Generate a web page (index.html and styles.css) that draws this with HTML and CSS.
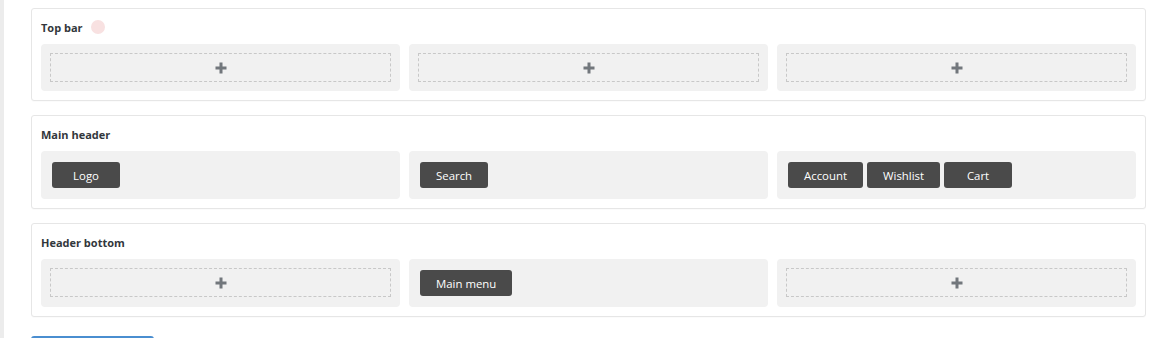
FILE: index.html
```html
<!DOCTYPE html>
<html lang="en">
<head>
<meta charset="utf-8">
<title>Header builder</title>
<link rel="stylesheet" href="styles.css">
</head>
<body>
<div class="layout">
  <div class="rail"></div>
  <main class="main">
    <section class="card">
      <h3 class="card-title">Top bar <span class="dot"></span></h3>
      <div class="cols">
        <div class="col"><div class="drop"><svg class="plus" viewBox="0 0 12 12"><path d="M6 0.5v11M0.5 6h11"/></svg></div></div>
        <div class="col"><div class="drop"><svg class="plus" viewBox="0 0 12 12"><path d="M6 0.5v11M0.5 6h11"/></svg></div></div>
        <div class="col"><div class="drop"><svg class="plus" viewBox="0 0 12 12"><path d="M6 0.5v11M0.5 6h11"/></svg></div></div>
      </div>
    </section>
    <section class="card">
      <h3 class="card-title">Main header</h3>
      <div class="cols">
        <div class="col"><div class="items"><span class="btn">Logo</span></div></div>
        <div class="col"><div class="items"><span class="btn">Search</span></div></div>
        <div class="col"><div class="items"><span class="btn">Account</span><span class="btn">Wishlist</span><span class="btn">Cart</span></div></div>
      </div>
    </section>
    <section class="card">
      <h3 class="card-title">Header bottom</h3>
      <div class="cols">
        <div class="col"><div class="drop"><svg class="plus" viewBox="0 0 12 12"><path d="M6 0.5v11M0.5 6h11"/></svg></div></div>
        <div class="col"><div class="items"><span class="btn">Main menu</span></div></div>
        <div class="col"><div class="drop"><svg class="plus" viewBox="0 0 12 12"><path d="M6 0.5v11M0.5 6h11"/></svg></div></div>
      </div>
    </section>
    <div class="save-bar"></div>
  </main>
</div>
</body>
</html>
```
FILE: styles.css
```css
* { box-sizing: border-box; }
html, body { margin: 0; padding: 0; background: #fff; }
body {
  font-family: "Open Sans", "Noto Sans", "Liberation Sans", sans-serif;
  color: #32373c;
  overflow: hidden;
  height: 338px;
}
.layout { display: flex; min-height: 338px; }
.rail { width: 4px; background: #ececec; flex: none; }
.main { width: 1142px; padding: 8px 0 0 27px; }
.card {
  border: 1px solid #e6e6e6;
  border-radius: 3px;
  padding: 0 9px 9px 9px;
  margin-bottom: 14px;
  background: #fff;
  box-shadow: 0 1px 1px rgba(0,0,0,0.02);
}
.card-title {
  margin: 0;
  padding: 11px 0 9px 0;
  height: 35px;
  font-size: 11px;
  line-height: 15px;
  font-weight: 700;
  display: flex;
  align-items: center;
  gap: 8px;
  color: #32373c;
}
.dot {
  width: 14px; height: 14px; border-radius: 50%;
  background: #f8e1e1; display: inline-block;
  margin-top: -2px;
}
.cols {
  display: grid;
  grid-template-columns: repeat(3, 1fr);
  gap: 9px;
}
.col {
  background: #f1f1f1;
  border-radius: 4px;
  padding: 9px;
}
.drop {
  height: 29px;
  border: 1px dashed #c8c8c8;
  display: flex;
  align-items: center;
  justify-content: center;
}
.plus { width: 12px; height: 12px; stroke: #72777c; stroke-width: 3; fill: none; }
.items { display: flex; gap: 4px; padding: 2px; }
.btn {
  display: inline-flex;
  align-items: center;
  justify-content: center;
  height: 26px;
  min-width: 68px;
  padding: 0 16px;
  background: #4a4a4a;
  color: #fff;
  border-radius: 3px;
  font-size: 11.4px;
}
.save-bar {
  margin-top: 19px;
  width: 123px;
  height: 10px;
  background: #4a8ed0;
  border-radius: 3px 3px 0 0;
}
```
